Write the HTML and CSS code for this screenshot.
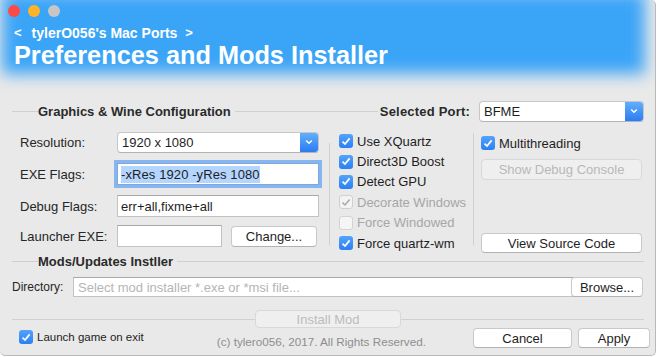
FILE: index.html
```html
<!DOCTYPE html>
<html lang="en">
<head>
  <meta charset="UTF-8">
  <meta name="viewport" content="width=device-width, initial-scale=1.0">
  <link rel="stylesheet" href="styles.css">
  <title>Preferences and Mods Installer</title>
</head>
<body>
  <div class="window">
    <header class="banner">
      <div class="lights">
        <span class="light red"></span>
        <span class="light yellow"></span>
        <span class="light gray"></span>
      </div>
      <div class="crumb"><span class="chev">&lt;</span>tylerO056's Mac Ports<span class="chev next">&gt;</span></div>
      <h1>Preferences and Mods Installer</h1>
    </header>

    <div class="group-head">
      <span class="lead"></span>
      <span class="legend">Graphics &amp; Wine Configuration</span>
      <span class="rule"></span>
      <span class="port-label">Selected Port:</span>
      <div class="popup port">
        <span class="value">BFME</span>
        <span class="arrow"><svg width="8" height="6" viewBox="0 0 8 6"><path d="M1.2 1.5 L4 4.3 L6.8 1.5" fill="none" stroke="#fff" stroke-width="1.4"/></svg></span>
      </div>
    </div>

    <div class="config">
      <div class="fields">
        <div class="row">
          <span class="label">Resolution:</span>
          <div class="popup wide">
            <span class="value">1920 x 1080</span>
            <span class="arrow"><svg width="8" height="6" viewBox="0 0 8 6"><path d="M1.2 1.5 L4 4.3 L6.8 1.5" fill="none" stroke="#fff" stroke-width="1.4"/></svg></span>
          </div>
        </div>
        <div class="row gap10">
          <span class="label">EXE Flags:</span>
          <div class="field wide focus"><span class="sel">-xRes 1920 -yRes 1080</span></div>
        </div>
        <div class="row gap10">
          <span class="label">Debug Flags:</span>
          <div class="field wide">err+all,fixme+all</div>
        </div>
        <div class="row gap8">
          <span class="label">Launcher EXE:</span>
          <div class="field short"></div>
          <a href="#" class="btn change">Change...</a>
        </div>
      </div>

      <div class="vsep left-sep"></div>

      <div class="checks">
        <label class="opt"><span class="check on"><svg width="10" height="9" viewBox="0 0 10 9"><path d="M1.5 4.6 L4 7 L8.6 1.4" fill="none" stroke="#fff" stroke-width="1.7"/></svg></span>Use XQuartz</label>
        <label class="opt"><span class="check on"><svg width="10" height="9" viewBox="0 0 10 9"><path d="M1.5 4.6 L4 7 L8.6 1.4" fill="none" stroke="#fff" stroke-width="1.7"/></svg></span>Direct3D Boost</label>
        <label class="opt"><span class="check on"><svg width="10" height="9" viewBox="0 0 10 9"><path d="M1.5 4.6 L4 7 L8.6 1.4" fill="none" stroke="#fff" stroke-width="1.7"/></svg></span>Detect GPU</label>
        <label class="opt disabled"><span class="check dim"><svg width="10" height="9" viewBox="0 0 10 9"><path d="M1.5 4.6 L4 7 L8.6 1.4" fill="none" stroke="#a9a9a9" stroke-width="1.5"/></svg></span>Decorate Windows</label>
        <label class="opt disabled"><span class="check off"></span>Force Windowed</label>
        <label class="opt"><span class="check on"><svg width="10" height="9" viewBox="0 0 10 9"><path d="M1.5 4.6 L4 7 L8.6 1.4" fill="none" stroke="#fff" stroke-width="1.7"/></svg></span>Force quartz-wm</label>
      </div>

      <div class="vsep right-sep"></div>

      <div class="extras">
        <label class="opt"><span class="check on"><svg width="10" height="9" viewBox="0 0 10 9"><path d="M1.5 4.6 L4 7 L8.6 1.4" fill="none" stroke="#fff" stroke-width="1.7"/></svg></span>Multithreading</label>
        <a href="#" class="btn disabled debug">Show Debug Console</a>
        <a href="#" class="btn source">View Source Code</a>
      </div>
    </div>

    <div class="group-head mods">
      <span class="lead"></span>
      <span class="legend">Mods/Updates Instller</span>
      <span class="rule"></span>
    </div>

    <div class="dir-row">
      <span class="dir-label">Directory:</span>
      <div class="field dir"><span class="placeholder">Select mod installer *.exe or *msi file...</span></div>
      <a href="#" class="btn browse">Browse...</a>
    </div>

    <div class="install-row">
      <span class="rule"></span>
      <a href="#" class="btn disabled install">Install Mod</a>
      <span class="rule"></span>
    </div>

    <div class="footer">
      <label class="opt launch"><span class="check on"><svg width="10" height="9" viewBox="0 0 10 9"><path d="M1.5 4.6 L4 7 L8.6 1.4" fill="none" stroke="#fff" stroke-width="1.7"/></svg></span>Launch game on exit</label>
      <span class="copy">(c) tylero056, 2017. All Rights Reserved.</span>
      <a href="#" class="btn cancel">Cancel</a>
      <a href="#" class="btn apply">Apply</a>
    </div>
  </div>
</body>
</html>
```

FILE: styles.css
```css
*, ::after, ::before {
  box-sizing: border-box;
}
body {
  margin: 0;
  padding: 0;
  background: #fff;
  color: #262626;
  font-size: 13px;
  font-family: "Liberation Sans", Arial, sans-serif;
}
.window {
  position: relative;
  width: 656px;
  height: 356px;
  background: #e9e9e9;
  border: 1px solid #b9b9b9;
  border-top: none;
  border-left: none;
  border-radius: 0 5px 5px 5px;
  overflow: hidden;
}

/* banner */
.banner {
  position: relative;
  height: 100px;
  padding: 5px 0 0 14px;
  color: #fff;
}
.banner::before {
  content: "";
  position: absolute;
  top: -8px;
  left: 2px;
  right: 10px;
  height: 82px;
  background: #3aa4f7;
  filter: blur(8px);
}
.banner > * {
  position: relative;
}
.lights {
  display: flex;
  gap: 8px;
  margin-left: -6px;
}
.light {
  width: 12px;
  height: 12px;
  border-radius: 50%;
}
.light.red { background: #fc4b47; }
.light.yellow { background: #fdb428; }
.light.gray { background: #c6c6c6; }
.crumb {
  display: flex;
  margin-top: 8px;
  font-size: 14px;
  line-height: 16px;
  font-weight: bold;
}
.crumb .chev {
  margin-right: 10px;
  font-size: 13px;
}
.crumb .chev.next {
  margin: 0 0 0 8px;
}
.banner h1 {
  margin: 0;
  font-size: 25.3px;
  line-height: 28px;
  font-weight: bold;
}

/* group headings */
.group-head {
  display: flex;
  align-items: center;
  height: 22px;
  padding: 0 11px 0 12px;
}
.group-head .lead {
  width: 26px;
  border-top: 1px solid #d0d0d0;
}
.legend {
  font-weight: bold;
  color: #2a2a2a;
  padding-right: 4px;
}
.rule {
  flex: 1;
  border-top: 1px solid #d0d0d0;
}
.port-label {
  font-weight: bold;
  color: #2a2a2a;
  margin-left: 2px;
  letter-spacing: 0.2px;
}
.group-head.mods {
  height: 16px;
}

/* popups */
.popup {
  display: flex;
  height: 21px;
  background: #fff;
  border: 1px solid #c6c6c6;
  border-bottom-color: #b3b3b3;
  border-radius: 4px;
  overflow: hidden;
}
.popup .value {
  flex: 1;
  padding-left: 4px;
  line-height: 19px;
  color: #1e1e1e;
}
.popup .arrow {
  width: 18px;
  display: flex;
  align-items: center;
  justify-content: center;
  background: linear-gradient(#63aefb, #2a7cf4);
}
.popup.port {
  width: 165px;
  margin-left: 9px;
}
.popup.wide {
  width: 202px;
}

/* config area */
.config {
  display: flex;
  height: 131px;
}
.fields {
  width: 329px;
  padding: 9px 0 0 20px;
}
.row {
  display: flex;
  align-items: center;
  height: 22px;
}
.row.gap10 { margin-top: 10px; }
.row.gap8 { margin-top: 8px; }
.label {
  width: 97px;
  color: #262626;
}
.field {
  display: flex;
  align-items: center;
  height: 22px;
  padding: 0 3px;
  background: #fff;
  border: 1px solid #c2c2c2;
  border-top-color: #a8a8a8;
  color: #1e1e1e;
}
.field.wide { width: 202px; }
.field.short { width: 105px; }
.field.focus {
  border-color: #7ea7df;
  box-shadow: 0 0 0 3px #86b5ef;
}
.sel {
  background: #b4d5fe;
  line-height: 17px;
  letter-spacing: 0.1px;
}
.vsep {
  width: 1px;
  background: #d0d0d0;
}
.left-sep {
  margin-top: 21px;
  height: 102px;
}
.right-sep {
  margin-top: 11px;
  height: 112px;
}
.checks {
  width: 143px;
  padding: 9px 0 0 9px;
}
.opt {
  display: flex;
  align-items: center;
  gap: 4px;
  height: 20.4px;
  color: #1e1e1e;
}
.opt.disabled {
  color: #a6a6a6;
}
.check {
  width: 14px;
  height: 14px;
  border-radius: 3px;
  display: flex;
  align-items: center;
  justify-content: center;
  flex-shrink: 0;
}
.check.on {
  background: linear-gradient(#54a3fa, #2b7ff5);
}
.check.dim {
  background: #f3f3f3;
  border: 1px solid #d0d0d0;
}
.check.off {
  background: #f5f5f5;
  border: 1px solid #d3d3d3;
}
.extras {
  display: flex;
  flex-direction: column;
  width: 171px;
  padding: 10px 0 0 7px;
}
.extras .opt {
  height: 22px;
}

/* buttons */
.btn {
  display: flex;
  align-items: center;
  justify-content: center;
  height: 21px;
  background: #fff;
  border: 1px solid #c9c9c9;
  border-bottom-color: #b2b2b2;
  border-radius: 4px;
  color: #1e1e1e;
  text-decoration: none;
}
.btn.disabled {
  background: #efefef;
  border-color: #d8d8d8;
  color: #b8b8b8;
}
.btn.change {
  width: 86px;
  margin-left: 9px;
}
.btn.debug {
  width: 161px;
  margin-top: 5px;
}
.btn.source {
  width: 161px;
  height: 20px;
  margin-top: 53px;
}

/* mods */
.dir-row {
  display: flex;
  align-items: center;
  height: 20px;
  margin-top: 8px;
  padding-left: 12px;
}
.dir-label {
  width: 61px;
  font-size: 12px;
  color: #262626;
}
.field.dir {
  width: 502px;
  height: 20px;
  padding-left: 4px;
}
.placeholder {
  color: #b5b5b5;
}
.btn.browse {
  width: 72px;
  height: 20px;
  margin-left: -4px;
}
.install-row {
  display: flex;
  align-items: center;
  height: 18px;
  margin-top: 13px;
  padding: 0 11px 0 12px;
}
.btn.install {
  width: 146px;
  height: 18px;
  color: #bcbcbc;
}

/* footer */
.footer {
  display: flex;
  height: 21px;
  padding: 0 5px 0 19px;
}
.opt.launch {
  align-self: flex-start;
  height: 14px;
  margin-top: 2px;
  font-size: 11.5px;
}
.copy {
  align-self: flex-end;
  margin-left: 73px;
  font-size: 11.7px;
  line-height: 14px;
  color: #8e8e8e;
}
.btn.cancel {
  width: 99px;
  height: 20px;
  margin-left: auto;
}
.btn.apply {
  width: 72px;
  height: 20px;
  margin-left: 6px;
}
```
